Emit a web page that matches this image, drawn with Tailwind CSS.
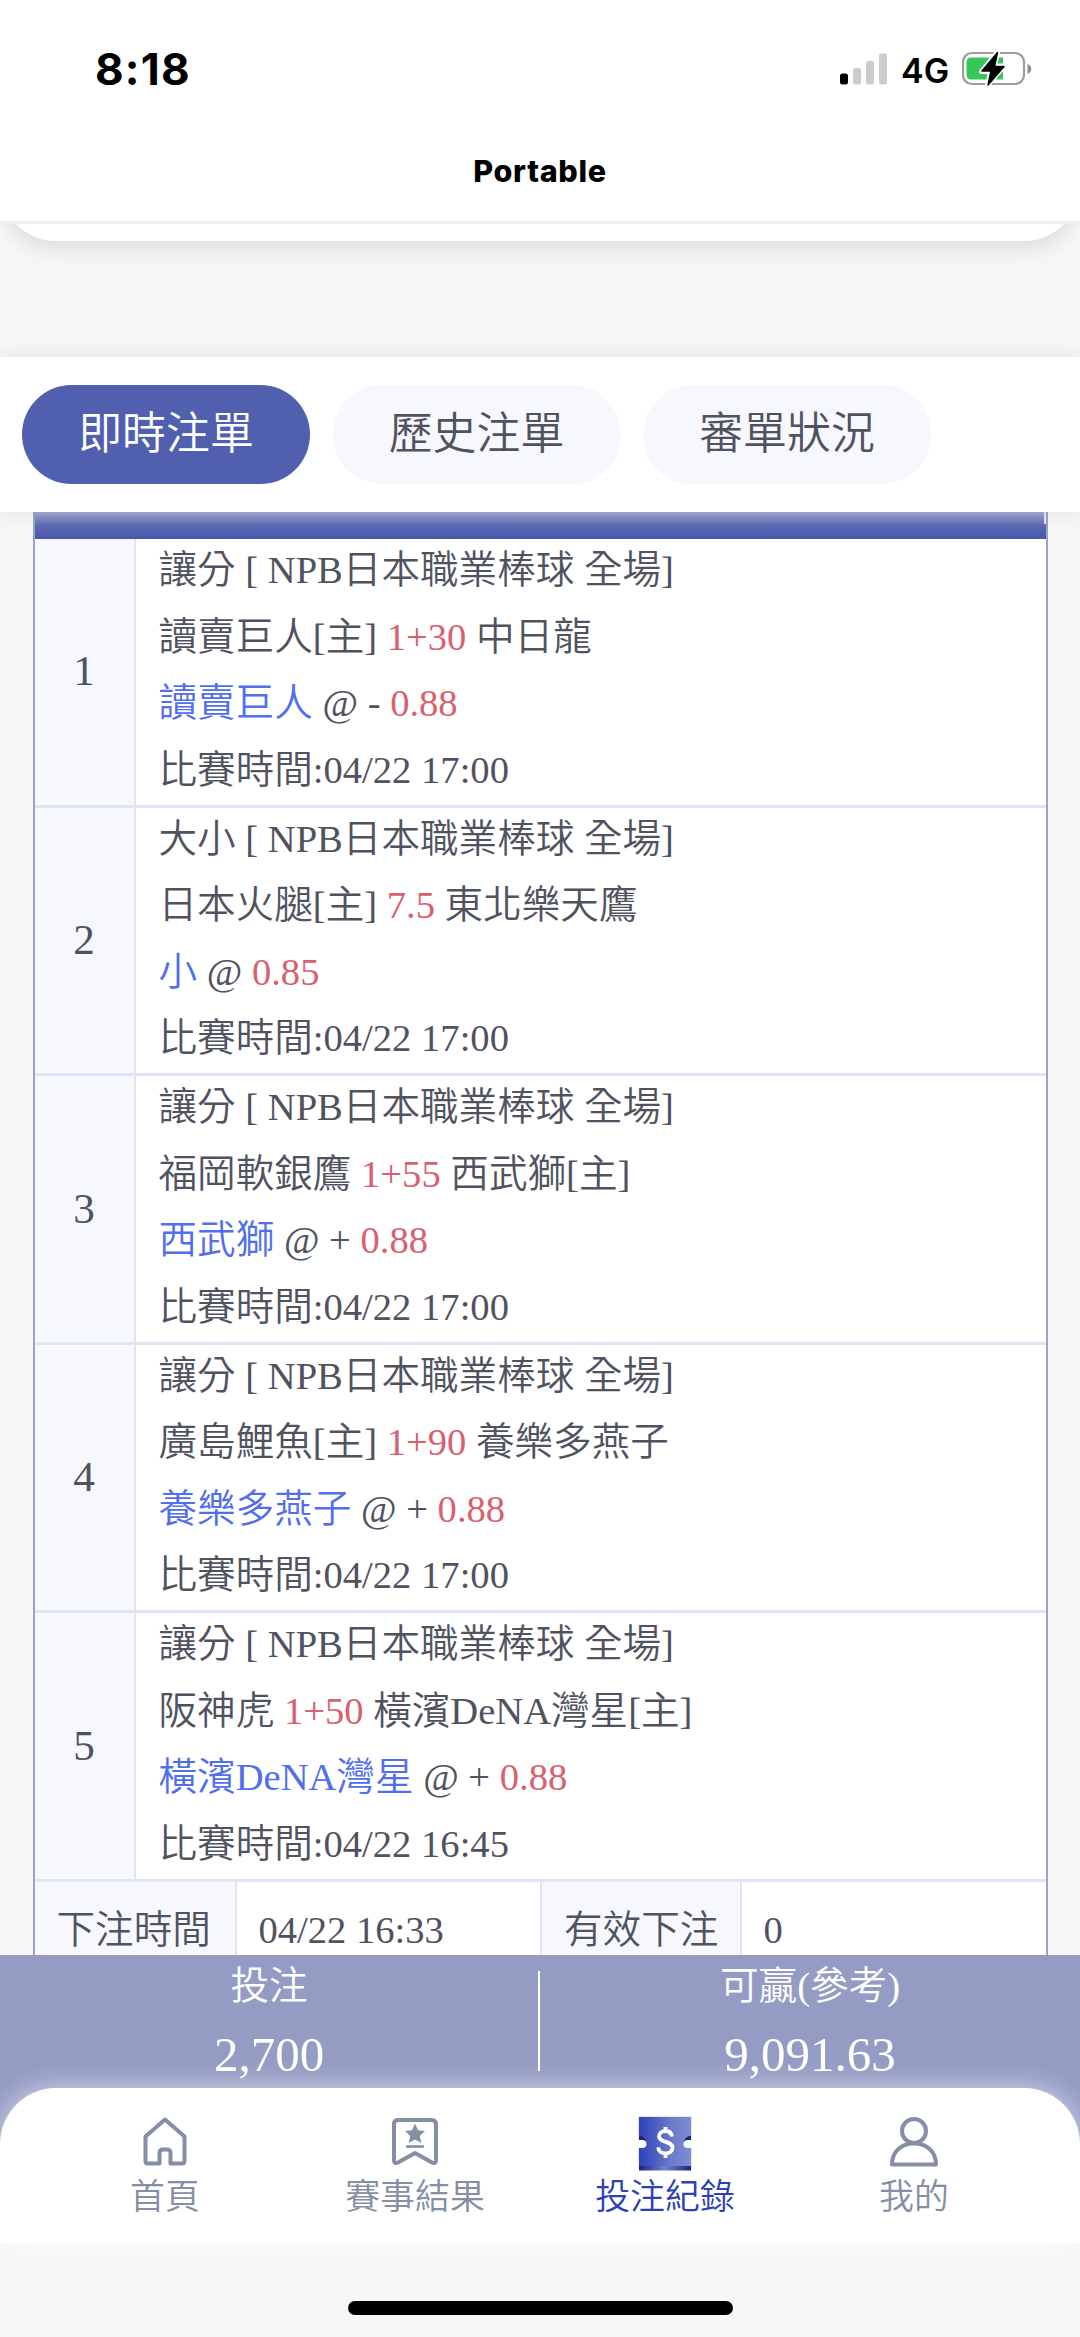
<!DOCTYPE html>
<html lang="zh-Hant">
<head>
<meta charset="utf-8">
<title>Portable</title>
<script src="https://cdn.jsdelivr.net/npm/@tailwindcss/browser@4"></script>
</head>
<body class="flex h-[2337px] w-[1080px] flex-col overflow-hidden bg-[#f7f7f7] font-['Liberation_Serif','Noto_Sans_CJK_TC',serif] text-[38.600px] font-[350] text-[#50535f]">

  <!-- Status bar and title -->
  <header class="z-20 flex h-[224px] shrink-0 flex-col border-b-[3px] border-[#efefef] bg-white font-['Inter',sans-serif] text-black">
    <div class="flex h-[138px] items-center justify-between pr-[48px] pl-[95px]">
      <span class="text-[44px] font-bold leading-none tracking-[1.200px]">8:18</span>
      <div class="flex items-center">
        <svg class="h-[32px] w-[48px]" viewBox="0 0 48 32">
          <rect x="0" y="20.500" width="8" height="11" rx="2.500" fill="#000"/>
          <rect x="13" y="15" width="8" height="16.500" rx="2.500" fill="#ccc"/>
          <rect x="26" y="8" width="8" height="23.500" rx="2.500" fill="#ccc"/>
          <rect x="39" y="0.500" width="8" height="31" rx="2.500" fill="#ccc"/>
        </svg>
        <span class="ml-[13px] w-[61px] pt-[3px] text-[34px] font-semibold leading-none">4G</span>
        <svg class="h-[36px] w-[70px]" viewBox="0 0 70 36">
          <rect x="1" y="2" width="61" height="31" rx="9" fill="none" stroke="#9c9c9c" stroke-width="2.200"/>
          <path d="M65.500 13c5 1.500 5 8.500 0 10z" fill="#8e8e8e"/>
          <path d="M9 6.500h32v22H9c-3 0-4.500-2-4.500-4.500V11c0-2.500 1.500-4.500 4.500-4.500z" fill="#35c759"/>
          <path d="M35.500 1 19.500 20.500h9L25.500 34.500 42 15h-9.500z" fill="#000" stroke="#fff" stroke-width="5" stroke-linejoin="round"/>
          <path d="M35.500 1.500 20 20h9L26 34 42 15.500h-9.500z" fill="#000" stroke="#000" stroke-width="1.500" stroke-linejoin="round"/>
        </svg>
      </div>
    </div>
    <h1 class="pt-[18px] text-center text-[30.500px] font-extrabold leading-[30px] tracking-[0.700px]">Portable</h1>
  </header>

  <!-- Bottom edge of the card above -->
  <div class="z-10 -mt-[60px] h-[77px] shrink-0 rounded-b-[56px] bg-white shadow-[0_8px_22px_rgba(0,0,0,0.11)]"></div>

  <!-- Tabs -->
  <nav class="z-10 mt-[116px] flex h-[155px] shrink-0 items-start gap-[22.500px] bg-white pt-[28px] pl-[22px] text-[43.900px] leading-[98px] shadow-[0_0_22px_rgba(0,0,0,0.09)]">
    <span class="h-[99px] w-[288px] rounded-full bg-[#505fae] text-center text-white">即時注單</span>
    <span class="h-[99px] w-[288px] rounded-full bg-[#f6f8fd] text-center">歷史注單</span>
    <span class="h-[99px] w-[288px] rounded-full bg-[#f6f8fd] text-center">審單狀況</span>
  </nav>

  <!-- Bets -->
  <main class="mx-[32.500px] flex h-[1443px] shrink-0 flex-col overflow-hidden border-x-[2.500px] border-[#9ba2cc] bg-white">
    <div class="flex h-[27px] shrink-0 justify-end bg-linear-to-b from-[#a6acd2] via-[#5d69b4] to-[#4857a9]"><i class="h-[12px] w-[2px] bg-[#e4e4ea]"></i></div>
    <section class="grid h-[268.600px] shrink-0 grid-cols-[101px_1fr] border-b-[3px] border-[#e1e4f5]">
      <div class="flex items-center justify-center border-r-2 border-[#e1e4f5] bg-[#f6f8fd] text-[43.200px]">1</div>
      <div class="-mt-[2px] pl-[23px] leading-[66.500px]">
        <p>讓分 [ NPB日本職業棒球 全場]</p>
        <p>讀賣巨人[主] <span class="text-[#d9606e]">1+30</span> 中日龍</p>
        <p><span class="text-[#506eee]">讀賣巨人</span> @ - <span class="text-[#d9606e]">0.88</span></p>
        <p>比賽時間:04/22 17:00</p>
      </div>
    </section>
    <section class="grid h-[268.600px] shrink-0 grid-cols-[101px_1fr] border-b-[3px] border-[#e1e4f5]">
      <div class="flex items-center justify-center border-r-2 border-[#e1e4f5] bg-[#f6f8fd] text-[43.200px]">2</div>
      <div class="-mt-[2px] pl-[23px] leading-[66.500px]">
        <p>大小 [ NPB日本職業棒球 全場]</p>
        <p>日本火腿[主] <span class="text-[#d9606e]">7.5</span> 東北樂天鷹</p>
        <p><span class="text-[#506eee]">小</span> @ <span class="text-[#d9606e]">0.85</span></p>
        <p>比賽時間:04/22 17:00</p>
      </div>
    </section>
    <section class="grid h-[268.600px] shrink-0 grid-cols-[101px_1fr] border-b-[3px] border-[#e1e4f5]">
      <div class="flex items-center justify-center border-r-2 border-[#e1e4f5] bg-[#f6f8fd] text-[43.200px]">3</div>
      <div class="-mt-[2px] pl-[23px] leading-[66.500px]">
        <p>讓分 [ NPB日本職業棒球 全場]</p>
        <p>福岡軟銀鷹 <span class="text-[#d9606e]">1+55</span> 西武獅[主]</p>
        <p><span class="text-[#506eee]">西武獅</span> @ + <span class="text-[#d9606e]">0.88</span></p>
        <p>比賽時間:04/22 17:00</p>
      </div>
    </section>
    <section class="grid h-[268.600px] shrink-0 grid-cols-[101px_1fr] border-b-[3px] border-[#e1e4f5]">
      <div class="flex items-center justify-center border-r-2 border-[#e1e4f5] bg-[#f6f8fd] text-[43.200px]">4</div>
      <div class="-mt-[2px] pl-[23px] leading-[66.500px]">
        <p>讓分 [ NPB日本職業棒球 全場]</p>
        <p>廣島鯉魚[主] <span class="text-[#d9606e]">1+90</span> 養樂多燕子</p>
        <p><span class="text-[#506eee]">養樂多燕子</span> @ + <span class="text-[#d9606e]">0.88</span></p>
        <p>比賽時間:04/22 17:00</p>
      </div>
    </section>
    <section class="grid h-[268.600px] shrink-0 grid-cols-[101px_1fr] border-b-[3px] border-[#e1e4f5]">
      <div class="flex items-center justify-center border-r-2 border-[#e1e4f5] bg-[#f6f8fd] text-[43.200px]">5</div>
      <div class="-mt-[2px] pl-[23px] leading-[66.500px]">
        <p>讓分 [ NPB日本職業棒球 全場]</p>
        <p>阪神虎 <span class="text-[#d9606e]">1+50</span> 橫濱DeNA灣星[主]</p>
        <p><span class="text-[#506eee]">橫濱DeNA灣星</span> @ + <span class="text-[#d9606e]">0.88</span></p>
        <p>比賽時間:04/22 16:45</p>
      </div>
    </section>
    <section class="grid h-[100px] shrink-0 grid-cols-[202px_305.500px_199.500px_1fr] leading-[97px]">
      <div class="border-r-2 border-[#e1e4f5] bg-[#f6f8fd] pl-[22px]">下注時間</div>
      <div class="border-r-2 border-[#e1e4f5] pl-[22px]">04/22 16:33</div>
      <div class="border-r-2 border-[#e1e4f5] bg-[#f6f8fd] pl-[22px]">有效下注</div>
      <div class="pl-[22px]">0</div>
    </section>
  </main>

  <!-- Totals -->
  <div class="flex h-[188px] shrink-0 bg-[#959cc4] pt-[16px] text-center text-white">
    <div class="h-[100px] w-[540px] border-r-2 border-white">
      <p class="leading-[30px]">投注</p>
      <p class="pt-[31px] text-[49px] leading-[46px]">2,700</p>
    </div>
    <div class="h-[100px] w-[540px]">
      <p class="leading-[30px]">可贏(參考)</p>
      <p class="pt-[31px] text-[49px] leading-[46px]">9,091.63</p>
    </div>
  </div>

  <!-- Bottom navigation -->
  <nav class="z-10 -mt-[55px] grid h-[155px] shrink-0 grid-cols-[250px_250px_250px_248px] rounded-t-[56px] bg-white pt-[25px] pl-[40px] text-center text-[34.900px] leading-[50px] text-[#868ea5] shadow-[0_0_28px_rgba(255,255,255,0.6)]">
    <a class="flex flex-col items-center">
      <svg class="h-[60px] w-[60px]" viewBox="0 0 60 60" fill="none" stroke="#868ea5" stroke-width="4">
        <path d="M30 6.500 10.500 23.500V48q0 2.500 2.500 2.500H24.500V40q0-3.500 3.500-3.500h4q3.500 0 3.500 3.500V50.500H47q2.500 0 2.500-2.500V23.500z" stroke-linejoin="round"/>
      </svg>
      <span>首頁</span>
    </a>
    <a class="flex flex-col items-center">
      <svg class="h-[60px] w-[60px]" viewBox="0 0 60 60" fill="none" stroke="#868ea5" stroke-width="4" stroke-linejoin="round">
        <path d="M12.500 7H46.500q4.500 0 4.500 4.500V47q0 4.500-4 2.500L30 40 13 49.500q-4 2-4-2.500V11.500Q9 7 12.500 7z"/>
        <path d="M21 33.500h18" stroke-width="2.600"/>
        <path d="m30 10.500 3 6.700 7 .8-5.300 4.900 1.700 7L30 26.500l-6.400 3.400 1.700-7L20 18l7-.8z" fill="#868ea5" stroke="none"/>
      </svg>
      <span>賽事結果</span>
    </a>
    <a class="flex flex-col items-center text-[#2c41b4]">
      <svg class="h-[60px] w-[60px]" viewBox="0 0 60 60">
        <defs>
          <linearGradient id="ticket"><stop offset="0" stop-color="#2d42b7"/><stop offset=".6" stop-color="#6a79cb"/><stop offset="1" stop-color="#818cd2"/></linearGradient>
          <linearGradient id="edge"><stop offset="0" stop-color="#16237c"/><stop offset=".5" stop-color="#7783d0"/><stop offset="1" stop-color="#16237c"/></linearGradient>
        </defs>
        <rect x="3" y="3" width="54" height="54" rx="2" fill="#e6e8ff"/>
        <rect x="4" y="4" width="52" height="53" fill="url(#ticket)"/>
        <rect x="4" y="53" width="52" height="4.500" fill="url(#edge)"/>
        <path d="M4 22.500q7 1 7.500 8L4 30zM56 22.500q-7 1-7.500 8L56 30z" fill="#1a277c"/>
        <path d="M3 27h4q4.500 0 4.500 4t-4.500 4H3zM57 27h-4q-4.500 0-4.500 4t4.500 4h4z" fill="#fff"/>
        <path d="M37 22.500c-.5-3.500-3-5.500-6.500-5.500S24 19 24 22.200c0 7 13.500 4.300 13.500 11.300 0 3.700-3 5.800-7 5.800-4.200 0-7-2.300-7.300-6M30.500 13v4M30.500 39v5" fill="none" stroke="#fff" stroke-width="3.800" transform="translate(0 1)"/>
      </svg>
      <span>投注紀錄</span>
    </a>
    <a class="flex flex-col items-center">
      <svg class="h-[60px] w-[60px]" viewBox="0 0 60 60" fill="none" stroke="#868ea5" stroke-width="4" stroke-linejoin="round">
        <circle cx="30" cy="18" r="12"/>
        <path d="M8 51.500C8 39 17 30.500 30 30.500S52 39 52 51.500z"/>
      </svg>
      <span>我的</span>
    </a>
  </nav>
  <div class="mx-auto mt-[58px] h-[14px] w-[385px] shrink-0 rounded-full bg-black"></div>
</body>
</html>
